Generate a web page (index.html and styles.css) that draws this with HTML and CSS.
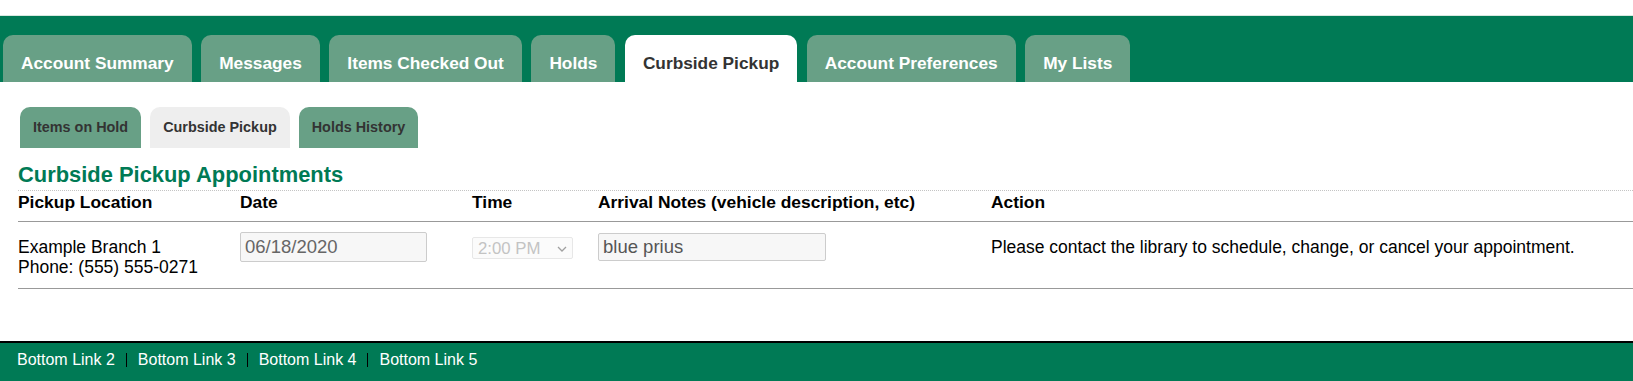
FILE: index.html
```html
<!DOCTYPE html>
<html lang="en">
<head>
  <meta charset="UTF-8">
  <meta name="viewport" content="width=device-width, initial-scale=1.0">
  <title>Curbside Pickup</title>
  <link rel="stylesheet" href="styles.css">
</head>
<body>

  <!-- Account tabs -->
  <nav class="main-tabs">
    <a class="tab" href="#">Account Summary</a>
    <a class="tab" href="#">Messages</a>
    <a class="tab" href="#">Items Checked Out</a>
    <a class="tab" href="#">Holds</a>
    <a class="tab active" href="#">Curbside Pickup</a>
    <a class="tab" href="#">Account Preferences</a>
    <a class="tab" href="#">My Lists</a>
  </nav>

  <div class="content">
    <nav class="sub-tabs">
      <a class="sub-tab" href="#">Items on Hold</a>
      <a class="sub-tab active" href="#">Curbside Pickup</a>
      <a class="sub-tab" href="#">Holds History</a>
    </nav>

    <h2 class="section-title">Curbside Pickup Appointments</h2>

    <table class="appointments">
      <thead>
        <tr>
          <th class="col-location">Pickup Location</th>
          <th class="col-date">Date</th>
          <th class="col-time">Time</th>
          <th class="col-notes">Arrival Notes (vehicle description, etc)</th>
          <th class="col-action">Action</th>
        </tr>
      </thead>
      <tbody>
        <tr>
          <td class="location">Example Branch 1<br>Phone: (555) 555-0271</td>
          <td><input class="date-input" type="text" value="06/18/2020" readonly></td>
          <td>
            <span class="select-wrap">
              <select class="time-select" disabled>
                <option>2:00 PM</option>
              </select>
              <svg class="chevron" width="10" height="6" viewBox="0 0 10 6">
                <path d="M1 1l4 4 4-4" fill="none" stroke="#a0a0a0" stroke-width="1.3"/>
              </svg>
            </span>
          </td>
          <td><input class="notes-input" type="text" value="blue prius" readonly></td>
          <td class="action">Please contact the library to schedule, change, or cancel your appointment.</td>
        </tr>
      </tbody>
    </table>
  </div>

  <footer class="bottom-links">
    <a href="#">Bottom Link 2</a>
    <span class="sep"></span>
    <a href="#">Bottom Link 3</a>
    <span class="sep"></span>
    <a href="#">Bottom Link 4</a>
    <span class="sep"></span>
    <a href="#">Bottom Link 5</a>
  </footer>

</body>
</html>
```

FILE: styles.css
```css
* {
  box-sizing: border-box;
  font-family: "Liberation Sans", Arial, sans-serif;
}

body {
  margin: 0;
  background: #fff;
  color: #000;
}

a {
  text-decoration: none;
}

/* main tabs */
.main-tabs {
  display: flex;
  gap: 9.5px;
  margin-top: 15px;
  padding: 19px 0 0 3px;
  background: #007a55;
  border-top: 1px solid #d8e8e0;
}

.tab {
  display: block;
  padding: 18px 18px 9px;
  font-size: 17.3px;
  line-height: 20px;
  font-weight: bold;
  color: #fff;
  background: #68a086;
  border-radius: 10px 10px 0 0;
}

.tab.active {
  background: #fff;
  color: #333;
}

/* page content */
.content {
  padding: 25px 0 0 18px;
}

.sub-tabs {
  display: flex;
  gap: 9px;
  margin-left: 2px;
}

.sub-tab {
  display: block;
  padding: 12px 13px;
  font-size: 14.4px;
  line-height: 17px;
  font-weight: bold;
  color: #333;
  background: #68a086;
  border-radius: 10px 10px 0 0;
}

.sub-tab.active {
  background: #eee;
}

.section-title {
  margin: 14px 0 0;
  padding-bottom: 3px;
  font-size: 21.9px;
  line-height: 25px;
  color: #007a55;
  border-bottom: 1px dotted #c4c4c4;
}

.appointments {
  width: 100%;
  border-collapse: collapse;
  table-layout: fixed;
  font-size: 17.5px;
  line-height: 20px;
}

.appointments th {
  text-align: left;
  padding: 1px 0 9px;
  font-size: 17.4px;
  border-bottom: 1px solid #999;
}

.appointments td {
  vertical-align: top;
  padding: 10px 0 11px;
  border-bottom: 1px solid #999;
}

.col-location { width: 222px; }
.col-date { width: 232px; }
.col-time { width: 126px; }
.col-notes { width: 393px; }

.appointments td.location,
.appointments td.action {
  padding-top: 15px;
}

.date-input,
.notes-input {
  display: block;
  padding: 0 4px;
  border: 1px solid #ccc;
  border-radius: 2px;
  background: #f7f7f7;
  font-size: 18.5px;
  color: #666;
}

.date-input {
  width: 187px;
  height: 30px;
}

.notes-input {
  width: 228px;
  height: 28px;
  margin-top: 1px;
  color: #555;
}

.select-wrap {
  position: relative;
  display: inline-block;
  margin-top: 5px;
}

.time-select {
  display: block;
  width: 101px;
  height: 22px;
  padding: 0 0 0 5px;
  border: 1px solid #ddd;
  border-radius: 2px;
  background: #fafafa;
  font-size: 16.8px;
  color: #aaa;
  appearance: none;
  -webkit-appearance: none;
}

.chevron {
  position: absolute;
  right: 6px;
  top: 9px;
}

/* footer */
.bottom-links {
  display: flex;
  align-items: center;
  margin-top: 52px;
  padding: 8px 0 20px 6px;
  background: #007a55;
  border-top: 2px solid #000;
  font-size: 16px;
  line-height: 18px;
}

.bottom-links a {
  color: #fff;
  padding: 0 11px;
}

.sep {
  display: block;
  width: 1px;
  height: 14px;
  background: #000;
}
```
